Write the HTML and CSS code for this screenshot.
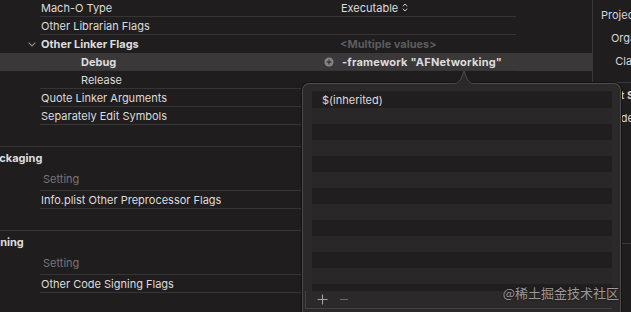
FILE: index.html
```html
<!DOCTYPE html>
<html lang="en">
<head>
    <meta charset="UTF-8">
    <meta name="viewport" content="width=device-width, initial-scale=1.0">
    <title>Build Settings</title>
    <link rel="stylesheet" href="styles.css">
</head>
<body>
    <div class="window">
        <!-- Таблица настроек сборки -->
        <div class="editor">
            <div class="row">
                <div class="gutter"></div>
                <div class="cell">
                    <span class="label">Mach-O Type</span>
                    <span class="value">Executable
                        <svg class="updown" width="6" height="9" viewBox="0 0 6 9"><path d="M0.8 3.3 L3 1 L5.2 3.3 M0.8 5.7 L3 8 L5.2 5.7" fill="none" stroke="#cfcfcf" stroke-width="1"/></svg>
                    </span>
                </div>
            </div>
            <div class="row">
                <div class="gutter"></div>
                <div class="cell"><span class="label">Other Librarian Flags</span></div>
            </div>
            <div class="row">
                <div class="gutter">
                    <svg class="disclosure" width="8" height="5" viewBox="0 0 8 5"><path d="M0.7 0.7 L4 4 L7.3 0.7" fill="none" stroke="#8d8b8c" stroke-width="1.1"/></svg>
                </div>
                <div class="cell no-line">
                    <span class="label bold">Other Linker Flags</span>
                    <span class="value muted">&lt;Multiple values&gt;</span>
                </div>
            </div>
            <div class="row selected">
                <div class="gutter"></div>
                <div class="cell">
                    <span class="label sub bold">Debug</span>
                    <span class="value">
                        <svg class="add-circle" width="10" height="10" viewBox="0 0 10 10"><circle cx="5" cy="5" r="4.6" fill="#858384"/><path d="M5 2.6 V7.4 M2.6 5 H7.4" stroke="#3b393a" stroke-width="1.3"/></svg>
                        <span class="bold">-framework "AFNetworking"</span>
                    </span>
                </div>
            </div>
            <div class="row">
                <div class="gutter"></div>
                <div class="cell"><span class="label sub">Release</span></div>
            </div>
            <div class="row">
                <div class="gutter"></div>
                <div class="cell"><span class="label">Quote Linker Arguments</span></div>
            </div>
            <div class="row">
                <div class="gutter"></div>
                <div class="cell"><span class="label">Separately Edit Symbols</span></div>
            </div>

            <div class="gap"></div>
            <div class="section-title"><span class="pack">Packaging</span></div>
            <div class="row tall">
                <div class="gutter"></div>
                <div class="cell"><span class="label column-head">Setting</span></div>
            </div>
            <div class="row">
                <div class="gutter"></div>
                <div class="cell"><span class="label">Info.plist Other Preprocessor Flags</span></div>
            </div>

            <div class="gap"></div>
            <div class="section-title"><span class="sign">Signing</span></div>
            <div class="row tall">
                <div class="gutter"></div>
                <div class="cell"><span class="label column-head">Setting</span></div>
            </div>
            <div class="row">
                <div class="gutter"></div>
                <div class="cell"><span class="label">Other Code Signing Flags</span></div>
            </div>
        </div>

        <!-- Инспектор справа -->
        <div class="inspector">
            <div class="field">Project Format</div>
            <div class="field">Organization</div>
            <div class="field">Class Prefix</div>
            <div class="divider"></div>
            <div class="group-title">Text Settings</div>
            <div class="field">Indent Using</div>
            <div class="divider low"></div>
        </div>
    </div>

    <!-- Всплывающее окно со списком значений -->
    <div class="popover">
        <svg class="popover-arrow" width="26" height="14" viewBox="0 0 26 14"><path d="M0 14 C6 14 8 12 10 9 L13 1 L16 9 C18 12 20 14 26 14" fill="#2b2929" stroke="#4d4b4c" stroke-width="1"/></svg>
        <div class="value-list">
            <div class="item">$(inherited)</div>
            <div class="item"></div>
            <div class="item"></div>
            <div class="item"></div>
            <div class="item"></div>
            <div class="item"></div>
            <div class="item"></div>
            <div class="item"></div>
            <div class="item"></div>
            <div class="item"></div>
            <div class="item"></div>
            <div class="item"></div>
            <div class="item"></div>
        </div>
        <div class="list-footer">
            <svg width="11" height="11" viewBox="0 0 11 11"><path d="M5.5 0.5 V10.5 M0.5 5.5 H10.5" stroke="#a3a1a2" stroke-width="1.1"/></svg>
            <svg width="10" height="11" viewBox="0 0 10 11"><path d="M1 5.5 H9" stroke="#686667" stroke-width="1.1"/></svg>
        </div>
    </div>

    <div class="watermark">@稀土掘金技术社区</div>
</body>
</html>
```

FILE: styles.css
```css
/* Общие настройки */
body {
    margin: 0;
    width: 631px;
    height: 312px;
    overflow: hidden;
    background-color: #1f1d1e;
    font-family: Inter, "Liberation Sans", sans-serif;
    font-size: 11px;
    color: #dedcdd;
    position: relative;
}

.window {
    display: flex;
    height: 100%;
}

/* Таблица настроек */
.editor {
    width: 592px;
    flex-shrink: 0;
    margin-top: -1px;
    border-right: 1px solid #3a3839;
}

.row {
    display: flex;
    height: 18px;
}

.row.tall {
    height: 22px;
}

.row.selected {
    background-color: #3a3839;
}

.gutter {
    width: 40px;
    display: flex;
    align-items: center;
    justify-content: flex-end;
}

.disclosure {
    margin-right: 4px;
}

.cell {
    width: 476px;
    box-sizing: border-box;
    border-bottom: 1px solid #363435;
    display: flex;
    align-items: center;
}

.cell.no-line {
    border-bottom-color: transparent;
}

.label {
    width: 300px;
    padding-left: 1px;
    white-space: nowrap;
}

.label.sub {
    width: 260px;
    padding-left: 41px;
}

.label.column-head {
    padding-left: 3px;
    padding-bottom: 2px;
    width: 298px;
    color: #777576;
}

.bold {
    font-weight: 700;
}

.value {
    display: flex;
    align-items: center;
    white-space: nowrap;
}

.value.muted {
    color: #5d5b5c;
    font-weight: 700;
    margin-left: -1px;
}

.value .bold {
    letter-spacing: 0.2px;
}

.updown {
    margin-left: 4px;
}

.add-circle {
    margin-left: -17px;
    margin-right: 8px;
}

.gap {
    height: 22px;
    box-sizing: border-box;
    border-bottom: 1px solid #363435;
}

.section-title {
    height: 22px;
    display: flex;
    align-items: center;
    font-weight: 700;
    overflow: hidden;
    white-space: nowrap;
}

.pack {
    margin-left: -14px;
}

.sign {
    margin-left: -17px;
}

/* Инспектор справа */
.inspector {
    width: 38px;
    overflow: hidden;
    padding-top: 4px;
    color: #d6d4d5;
}

.field {
    width: 84px;
    height: 23px;
    line-height: 23px;
    text-align: right;
    white-space: nowrap;
}

.divider {
    width: 120px;
    margin-top: 9px;
    border-top: 1px solid #3a3839;
}

.divider.low {
    margin-top: 113px;
}

.group-title {
    height: 24px;
    line-height: 24px;
    padding-left: 8px;
    font-weight: 700;
    white-space: nowrap;
}

/* Всплывающий список значений */
.popover {
    position: absolute;
    left: 302px;
    top: 83px;
    width: 319px;
    height: 229px;
    box-sizing: border-box;
    padding: 7px 8px 0 9px;
    background-color: #2b2929;
    border: 1px solid #4d4b4c;
    border-bottom: none;
    border-radius: 7px 7px 0 0;
    box-shadow: 0 0 0 1px #131112;
}

.popover-arrow {
    position: absolute;
    left: 148px;
    top: -14px;
}

.value-list {
    height: 199px;
    overflow: hidden;
    border-top: 1px solid #232122;
}

.item {
    height: 16px;
    line-height: 16px;
    padding-left: 10px;
    background-color: #201e1f;
}

.item:nth-child(even) {
    background-color: #292728;
}

.list-footer {
    height: 18px;
    margin-left: -7px;
    width: 307px;
    box-sizing: border-box;
    border-left: 1px solid #434142;
    border-bottom: 1px solid #434142;
    display: flex;
    align-items: center;
    gap: 11px;
    padding-left: 11px;
}

/* Водяной знак */
.watermark {
    position: absolute;
    right: 12px;
    bottom: 10px;
    font-family: "Noto Sans CJK SC", sans-serif;
    font-size: 13px;
    color: #9b999a;
    text-shadow: 0 0 2px #111;
}
```
